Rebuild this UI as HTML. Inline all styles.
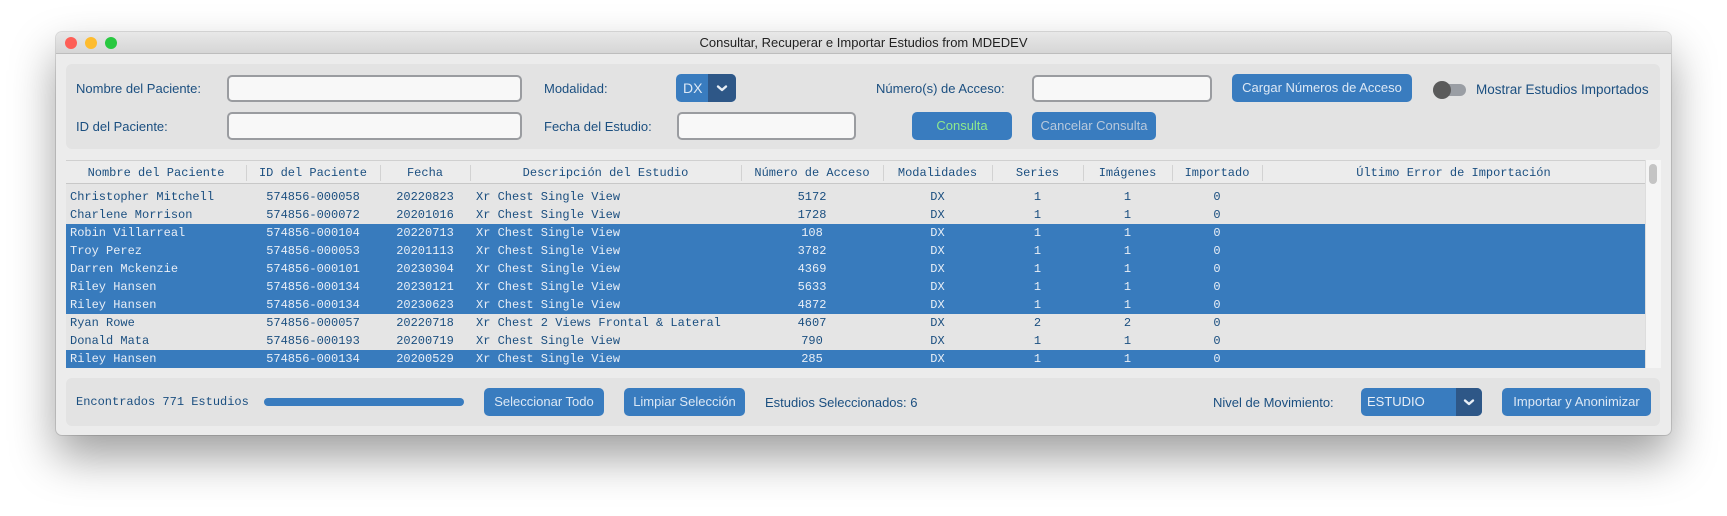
<!DOCTYPE html>
<html><head><meta charset="utf-8"><style>
*{box-sizing:border-box;margin:0;padding:0}
body{width:1727px;height:516px;background:#fff;position:relative;overflow:hidden;font-family:"Liberation Sans",sans-serif}
.a{position:absolute}
.win{left:56px;top:32px;width:1615px;height:403px;background:#ececec;border-radius:6px;box-shadow:0 22px 45px rgba(0,0,0,.38),0 0 0 1px rgba(0,0,0,.12)}
.tb{left:0;top:0;width:1615px;height:22px;background:linear-gradient(#e8e8e8,#d6d6d6);border-bottom:1px solid #bdbdbd;border-radius:6px 6px 0 0;text-align:center;font-size:13px;line-height:22px;color:#222}
.dot{width:12px;height:12px;border-radius:50%;top:5px}
.lbl{font-size:13px;color:#1b4f80;line-height:16px}
.inp{background:#f8f8f8;border:2px solid #9a9ca0;border-radius:5px}
.btn{background:#397cbf;border-radius:5px;color:#dce8f5;font-size:13px;text-align:center}
.panel{background:#e3e3e3;border-radius:6px}
.mono{font-family:"Liberation Mono",monospace;font-size:12px}
.row{left:66px;width:1579px;height:18px;line-height:18px;color:#1b4f80}
.row.s{background:#387bbd;color:#e8eef6}
.row span,.hd span{position:absolute;white-space:pre}
.c{text-align:center}
.hd{left:66px;top:160px;width:1579px;height:24px;line-height:24px;background:#ececec;border-top:1px solid #d0d0d0;border-bottom:1px solid #c8c8c8;color:#1b4f80}
.sep{position:absolute;top:4px;width:1px;height:16px;background:#d2d2d2}
</style></head><body>
<div class="a win">
 <div class="a tb">Consultar, Recuperar e Importar Estudios from MDEDEV</div>
 <div class="a dot" style="left:9px;background:#fe5f57"></div>
 <div class="a dot" style="left:29px;background:#febc2e"></div>
 <div class="a dot" style="left:49px;background:#28c840"></div>
</div>
<div class="a panel" style="left:66px;top:64px;width:1594px;height:85px"></div>
<div class="a lbl" style="left:76px;top:81px">Nombre del Paciente:</div>
<div class="a inp" style="left:227px;top:75px;width:295px;height:27px"></div>
<div class="a lbl" style="left:76px;top:119px">ID del Paciente:</div>
<div class="a inp" style="left:227px;top:112px;width:295px;height:28px"></div>
<div class="a lbl" style="left:544px;top:81px">Modalidad:</div>
<div class="a btn" style="left:676px;top:74px;width:60px;height:28px;line-height:28px;text-align:left;padding-left:7px;font-size:14px">DX</div>
<div class="a" style="left:708px;top:74px;width:28px;height:28px;background:#2e5787;border-radius:0 5px 5px 0"><svg width="28" height="28"><path d="M10 12.5l4 3.5 4-3.5" stroke="#e8eef6" stroke-width="2.4" fill="none" stroke-linecap="round" stroke-linejoin="round"/></svg></div>
<div class="a lbl" style="left:544px;top:119px">Fecha del Estudio:</div>
<div class="a inp" style="left:677px;top:112px;width:179px;height:28px"></div>
<div class="a lbl" style="left:876px;top:81px">Número(s) de Acceso:</div>
<div class="a inp" style="left:1032px;top:75px;width:180px;height:27px"></div>
<div class="a btn" style="left:1232px;top:74px;width:180px;height:28px;line-height:28px">Cargar Números de Acceso</div>
<div class="a" style="left:1433px;top:84px;width:33px;height:12px;border-radius:6px;background:#9a9ea4"></div>
<div class="a" style="left:1433px;top:81px;width:18px;height:18px;border-radius:50%;background:#5b5b5b"></div>
<div class="a lbl" style="left:1476px;top:82px;font-size:13.5px">Mostrar Estudios Importados</div>
<div class="a btn" style="left:912px;top:112px;width:100px;height:28px;line-height:28px;color:#8ee88e">Consulta</div>
<div class="a btn" style="left:1032px;top:112px;width:124px;height:28px;line-height:28px;color:#b8c9dc">Cancelar Consulta</div>

<div class="a" style="left:66px;top:160px;width:1595px;height:208px;background:#e5e5e5"></div>
<div class="a hd mono">
 <span class="c" style="left:0;width:180px">Nombre del Paciente</span><div class="sep" style="left:180px"></div>
 <span class="c" style="left:180px;width:134px">ID del Paciente</span><div class="sep" style="left:314px"></div>
 <span class="c" style="left:314px;width:90px">Fecha</span><div class="sep" style="left:404px"></div>
 <span class="c" style="left:404px;width:271px">Descripción del Estudio</span><div class="sep" style="left:675px"></div>
 <span class="c" style="left:675px;width:142px">Número de Acceso</span><div class="sep" style="left:817px"></div>
 <span class="c" style="left:817px;width:109px">Modalidades</span><div class="sep" style="left:926px"></div>
 <span class="c" style="left:926px;width:91px">Series</span><div class="sep" style="left:1017px"></div>
 <span class="c" style="left:1017px;width:89px">Imágenes</span><div class="sep" style="left:1106px"></div>
 <span class="c" style="left:1106px;width:90px">Importado</span><div class="sep" style="left:1196px"></div>
 <span class="c" style="left:1196px;width:383px">Último Error de Importación</span>
</div>
<div class="a" style="left:1645px;top:160px;width:16px;height:208px;background:#f5f5f5;border-left:1px solid #ddd"></div>
<div class="a" style="left:1649px;top:164px;width:8px;height:20px;border-radius:4px;background:#c4c4c4"></div>

<div id="rows"></div>
<script>
const d=[["Christopher Mitchell","574856-000058","20220823","Xr Chest Single View","5172","DX","1","1",0],
["Charlene Morrison","574856-000072","20201016","Xr Chest Single View","1728","DX","1","1",0],
["Robin Villarreal","574856-000104","20220713","Xr Chest Single View","108","DX","1","1",1],
["Troy Perez","574856-000053","20201113","Xr Chest Single View","3782","DX","1","1",1],
["Darren Mckenzie","574856-000101","20230304","Xr Chest Single View","4369","DX","1","1",1],
["Riley Hansen","574856-000134","20230121","Xr Chest Single View","5633","DX","1","1",1],
["Riley Hansen","574856-000134","20230623","Xr Chest Single View","4872","DX","1","1",1],
["Ryan Rowe","574856-000057","20220718","Xr Chest 2 Views Frontal & Lateral","4607","DX","2","2",0],
["Donald Mata","574856-000193","20200719","Xr Chest Single View","790","DX","1","1",0],
["Riley Hansen","574856-000134","20200529","Xr Chest Single View","285","DX","1","1",1]];
let h="";
d.forEach((r,i)=>{
h+=`<div class="a row mono${r[8]?' s':''}" style="top:${188+i*18}px">
<span style="left:4px">${r[0].replace('&','&amp;')}</span>
<span class="c" style="left:180px;width:134px">${r[1]}</span>
<span class="c" style="left:314px;width:90px">${r[2]}</span>
<span style="left:410px">${r[3].replace('&','&amp;')}</span>
<span class="c" style="left:675px;width:142px">${r[4]}</span>
<span class="c" style="left:817px;width:109px">${r[5]}</span>
<span class="c" style="left:926px;width:91px">${r[6]}</span>
<span class="c" style="left:1017px;width:89px">${r[7]}</span>
<span class="c" style="left:1106px;width:90px">0</span></div>`;});
document.getElementById("rows").outerHTML=h;
</script>

<div class="a panel" style="left:66px;top:378px;width:1594px;height:48px"></div>
<div class="a lbl mono" style="left:76px;top:394px">Encontrados 771 Estudios</div>
<div class="a" style="left:264px;top:398px;width:200px;height:8px;border-radius:4px;background:#397cbf"></div>
<div class="a btn" style="left:484px;top:388px;width:120px;height:28px;line-height:28px">Seleccionar Todo</div>
<div class="a btn" style="left:624px;top:388px;width:121px;height:28px;line-height:28px">Limpiar Selección</div>
<div class="a lbl" style="left:765px;top:395px">Estudios Seleccionados: 6</div>
<div class="a lbl" style="left:1213px;top:395px">Nivel de Movimiento:</div>
<div class="a btn" style="left:1361px;top:388px;width:121px;height:28px;line-height:28px;text-align:left;padding-left:6px;color:#e8eef6">ESTUDIO</div>
<div class="a" style="left:1456px;top:388px;width:26px;height:28px;background:#2e5787;border-radius:0 5px 5px 0"><svg width="26" height="28"><path d="M9 12.5l4 3.5 4-3.5" stroke="#e8eef6" stroke-width="2.4" fill="none" stroke-linecap="round" stroke-linejoin="round"/></svg></div>
<div class="a btn" style="left:1502px;top:388px;width:149px;height:28px;line-height:28px">Importar y Anonimizar</div>
</body></html>
